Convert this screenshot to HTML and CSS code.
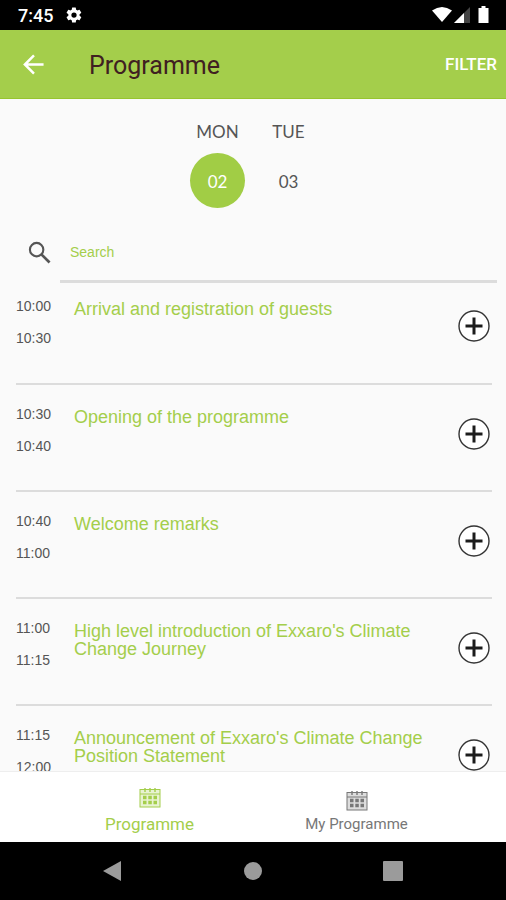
FILE: index.html
```html
<!doctype html>
<html lang="en">
  <head>
    <meta charset="utf-8" />
    <meta name="viewport" content="width=device-width, initial-scale=1" />
    <title>Programme</title>
    <link rel="stylesheet" href="styles.css">
  </head>
  <body>
    <!-- Shared icons -->
    <svg class="icon-defs" aria-hidden="true">
      <symbol id="icon-add" viewBox="0 0 32 32">
        <circle cx="16" cy="16" r="15" fill="#fff" stroke="#333" stroke-width="1.4" />
        <path d="M16 7.500v17M7.500 16h17" fill="none" stroke="#1c1c1c" stroke-width="3" />
      </symbol>
      <symbol id="icon-calendar" viewBox="0 0 22 20">
        <rect x="1" y="1.500" width="20" height="17.500" fill="currentColor" fill-opacity="0.25" stroke="currentColor" stroke-width="1" />
        <path d="M1 6h20" stroke="currentColor" stroke-width="1" />
        <path d="M6 0v4M11 0v4M16 0v4" stroke="currentColor" stroke-width="1.4" />
        <path d="M4 9.500h3.500M9.300 9.500h3.500M14.500 9.500h3.500M4 14.500h3.500M9.300 14.500h3.500M14.500 14.500h3.500" stroke="currentColor" stroke-width="3.400" />
      </symbol>
    </svg>

    <div class="status-bar">
      <span class="clock">7:45</span>
      <svg class="status-gear" viewBox="0 0 24 24"><path fill="#fff" d="M19.4 13a7.500 7.500 0 0 0 0-2l2.100-1.600a.5.5 0 0 0 .1-.6l-2-3.500a.5.5 0 0 0-.6-.2l-2.500 1a7.300 7.300 0 0 0-1.700-1l-.4-2.600a.5.5 0 0 0-.5-.5h-4a.5.5 0 0 0-.5.500L9 5.100a7.300 7.300 0 0 0-1.700 1l-2.500-1a.5.5 0 0 0-.6.200l-2 3.500a.5.5 0 0 0 .1.600L4.500 11a7.500 7.500 0 0 0 0 2l-2.200 1.600a.5.5 0 0 0-.1.600l2 3.500c.1.200.4.300.6.200l2.500-1a7.300 7.300 0 0 0 1.700 1l.4 2.600c0 .3.200.5.500.5h4c.3 0 .5-.2.500-.5l.4-2.600a7.300 7.300 0 0 0 1.700-1l2.500 1c.2.100.5 0 .6-.2l2-3.500a.5.5 0 0 0-.1-.6zM12 15.500a3.500 3.500 0 1 1 0-7 3.500 3.500 0 0 1 0 7z" /></svg>
      <svg class="status-signals" viewBox="0 0 58 18">
        <path d="M0 4.500Q10 -2.500 20 4.500L10 16z" fill="#fff" />
        <path d="M38 1v16H22z" fill="#444" />
        <path d="M32 7v10H22z" fill="#fff" />
        <path d="M46.500 2h3V0h4v2h3v15h-10z" fill="#fff" />
      </svg>
    </div>

    <header class="app-bar">
      <button class="back" aria-label="Back">
        <svg viewBox="0 0 24 24"><path fill="none" stroke="#fff" stroke-width="2.600" d="M22.500 12H4M12.500 2.500L3 12l9.500 9.500" /></svg>
      </button>
      <h1>Programme</h1>
      <button class="filter">FILTER</button>
    </header>

    <main>
      <div class="days">
        <button class="day active"><span>MON</span><span class="date">02</span></button>
        <button class="day"><span>TUE</span><span class="date">03</span></button>
      </div>

      <div class="search">
        <label for="search" aria-label="Search">
          <svg viewBox="0 0 24 24"><circle cx="9" cy="9" r="7" fill="none" stroke="#555" stroke-width="2.200" /><path d="M14 14l8.500 8.500" stroke="#555" stroke-width="2.800" /></svg>
        </label>
        <input type="text" id="search" placeholder="Search" />
      </div>

      <ul class="sessions">
        <li class="session">
          <div class="times"><time>10:00</time><time>10:30</time></div>
          <h2>Arrival and registration of guests</h2>
          <button class="add" aria-label="Add"><svg><use href="#icon-add" /></svg></button>
        </li>
        <li class="session">
          <div class="times"><time>10:30</time><time>10:40</time></div>
          <h2>Opening of the programme</h2>
          <button class="add" aria-label="Add"><svg><use href="#icon-add" /></svg></button>
        </li>
        <li class="session">
          <div class="times"><time>10:40</time><time>11:00</time></div>
          <h2>Welcome remarks</h2>
          <button class="add" aria-label="Add"><svg><use href="#icon-add" /></svg></button>
        </li>
        <li class="session">
          <div class="times"><time>11:00</time><time>11:15</time></div>
          <h2>High level introduction of Exxaro's Climate Change Journey</h2>
          <button class="add" aria-label="Add"><svg><use href="#icon-add" /></svg></button>
        </li>
        <li class="session">
          <div class="times"><time>11:15</time><time>12:00</time></div>
          <h2>Announcement of Exxaro's Climate Change Position Statement</h2>
          <button class="add" aria-label="Add"><svg><use href="#icon-add" /></svg></button>
        </li>
      </ul>
    </main>

    <nav class="tabs">
      <a href="#" class="tab active"><svg><use href="#icon-calendar" /></svg>Programme</a>
      <a href="#" class="tab"><svg><use href="#icon-calendar" /></svg>My Programme</a>
    </nav>

    <div class="system-nav">
      <button aria-label="System back"><svg viewBox="0 0 20 20"><path d="M18 0v20L0 10z" fill="#9b9b9b" /></svg></button>
      <button aria-label="Home"><svg viewBox="0 0 20 20"><circle cx="10" cy="10" r="9" fill="#9b9b9b" /></svg></button>
      <button aria-label="Recent apps"><svg viewBox="0 0 20 20"><rect width="20" height="20" rx="1" fill="#9b9b9b" /></svg></button>
    </div>
  </body>
</html>
```

FILE: styles.css
```css
* {
  box-sizing: border-box;
}
body {
  margin: 0;
  height: 100vh;
  display: flex;
  flex-direction: column;
  background: #fafafa;
  color: #555;
  font-family: "Liberation Sans", Arial, sans-serif;
}
button {
  padding: 0;
  border: none;
  background: none;
  color: inherit;
  font: inherit;
  cursor: pointer;
}
svg {
  display: block;
}
.icon-defs {
  display: none;
}
.status-bar {
  flex: none;
  display: flex;
  align-items: center;
  height: 30px;
  padding: 0 16px 0 18px;
  background: #000;
  color: #fff;
}
.clock {
  font-family: Roboto, sans-serif;
  font-size: 18px;
  font-weight: 500;
}
.status-gear {
  width: 18px;
  height: 18px;
  margin-left: 12px;
}
.status-signals {
  width: 58px;
  height: 18px;
  margin-left: auto;
}
.app-bar {
  flex: none;
  display: flex;
  align-items: center;
  height: 69px;
  padding: 0 9px 0 22px;
  background: #a4ce4b;
  border-bottom: 1px solid #97c52f;
  font-family: Roboto, sans-serif;
}
.back svg {
  width: 23px;
  height: 23px;
}
.app-bar h1 {
  margin: 2px 0 0 44px;
  color: #3f2021;
  font-size: 25px;
  font-weight: 400;
}
.filter {
  margin-left: auto;
  color: #fff;
  font-size: 17px;
  font-weight: 500;
}
main {
  flex: 1;
  min-height: 0;
  overflow: hidden;
}
.days {
  display: flex;
  justify-content: center;
  gap: 16px;
  padding-top: 22px;
  font-family: Lato, sans-serif;
  font-size: 17px;
}
.day {
  display: flex;
  flex-direction: column;
  align-items: center;
  gap: 10px;
  width: 55px;
  line-height: 22px;
}
.date {
  width: 55px;
  height: 55px;
  padding-top: 1px;
  border-radius: 50%;
  line-height: 55px;
}
.day.active .date {
  background: #a1cd45;
  color: #fff;
}
.search {
  display: flex;
  align-items: center;
  height: 75px;
  padding: 0 9px 0 28px;
}
.search label {
  width: 32px;
}
.search svg {
  width: 23px;
  height: 23px;
}
.search label {
  padding-top: 13px;
}
.search input {
  flex: 1;
  min-width: 0;
  height: 100%;
  padding: 16px 0 0 10px;
  border: none;
  border-bottom: 3px solid #dcdcdc;
  outline: none;
  background: none;
  color: #a4ce4b;
  font-family: inherit;
  font-size: 14px;
}
.search input::placeholder {
  color: #a4ce4b;
  opacity: 1;
}
.sessions {
  margin: 0;
  padding: 0 14px 0 16px;
  list-style: none;
}
.session {
  display: flex;
  align-items: flex-start;
  height: 107px;
  padding-top: 20px;
  border-bottom: 2px solid #dcdcdc;
}
.session:first-child {
  height: 102px;
  padding-top: 14px;
}
.times {
  flex: none;
  display: flex;
  flex-direction: column;
  gap: 14px;
  width: 58px;
  font-size: 14px;
  line-height: 18px;
}
.session h2 {
  flex: 1;
  margin: 3px 0 0;
  padding-right: 18px;
  color: #a4ce4b;
  font-size: 18px;
  font-weight: normal;
  line-height: 18px;
}
.add {
  margin: 13px 2px 0 0;
}
.add svg {
  width: 32px;
  height: 32px;
}
.tabs {
  flex: none;
  display: flex;
  height: 71px;
  padding: 0 46px;
  background: #fff;
  border-top: 1px solid #eee;
}
.tab {
  flex: 1;
  display: flex;
  flex-direction: column;
  align-items: center;
  justify-content: flex-end;
  gap: 3px;
  padding-bottom: 8px;
  color: #777;
  font-family: Roboto, sans-serif;
  font-size: 15px;
  line-height: 20px;
  text-decoration: none;
}
.tab svg {
  width: 22px;
  height: 20px;
}
.tab.active {
  gap: 6px;
  color: #a4ce4b;
  font-size: 17px;
}
.system-nav {
  flex: none;
  display: flex;
  justify-content: space-between;
  align-items: center;
  height: 58px;
  padding: 0 103px;
  background: #000;
}
.system-nav svg {
  width: 20px;
  height: 20px;
}
```
